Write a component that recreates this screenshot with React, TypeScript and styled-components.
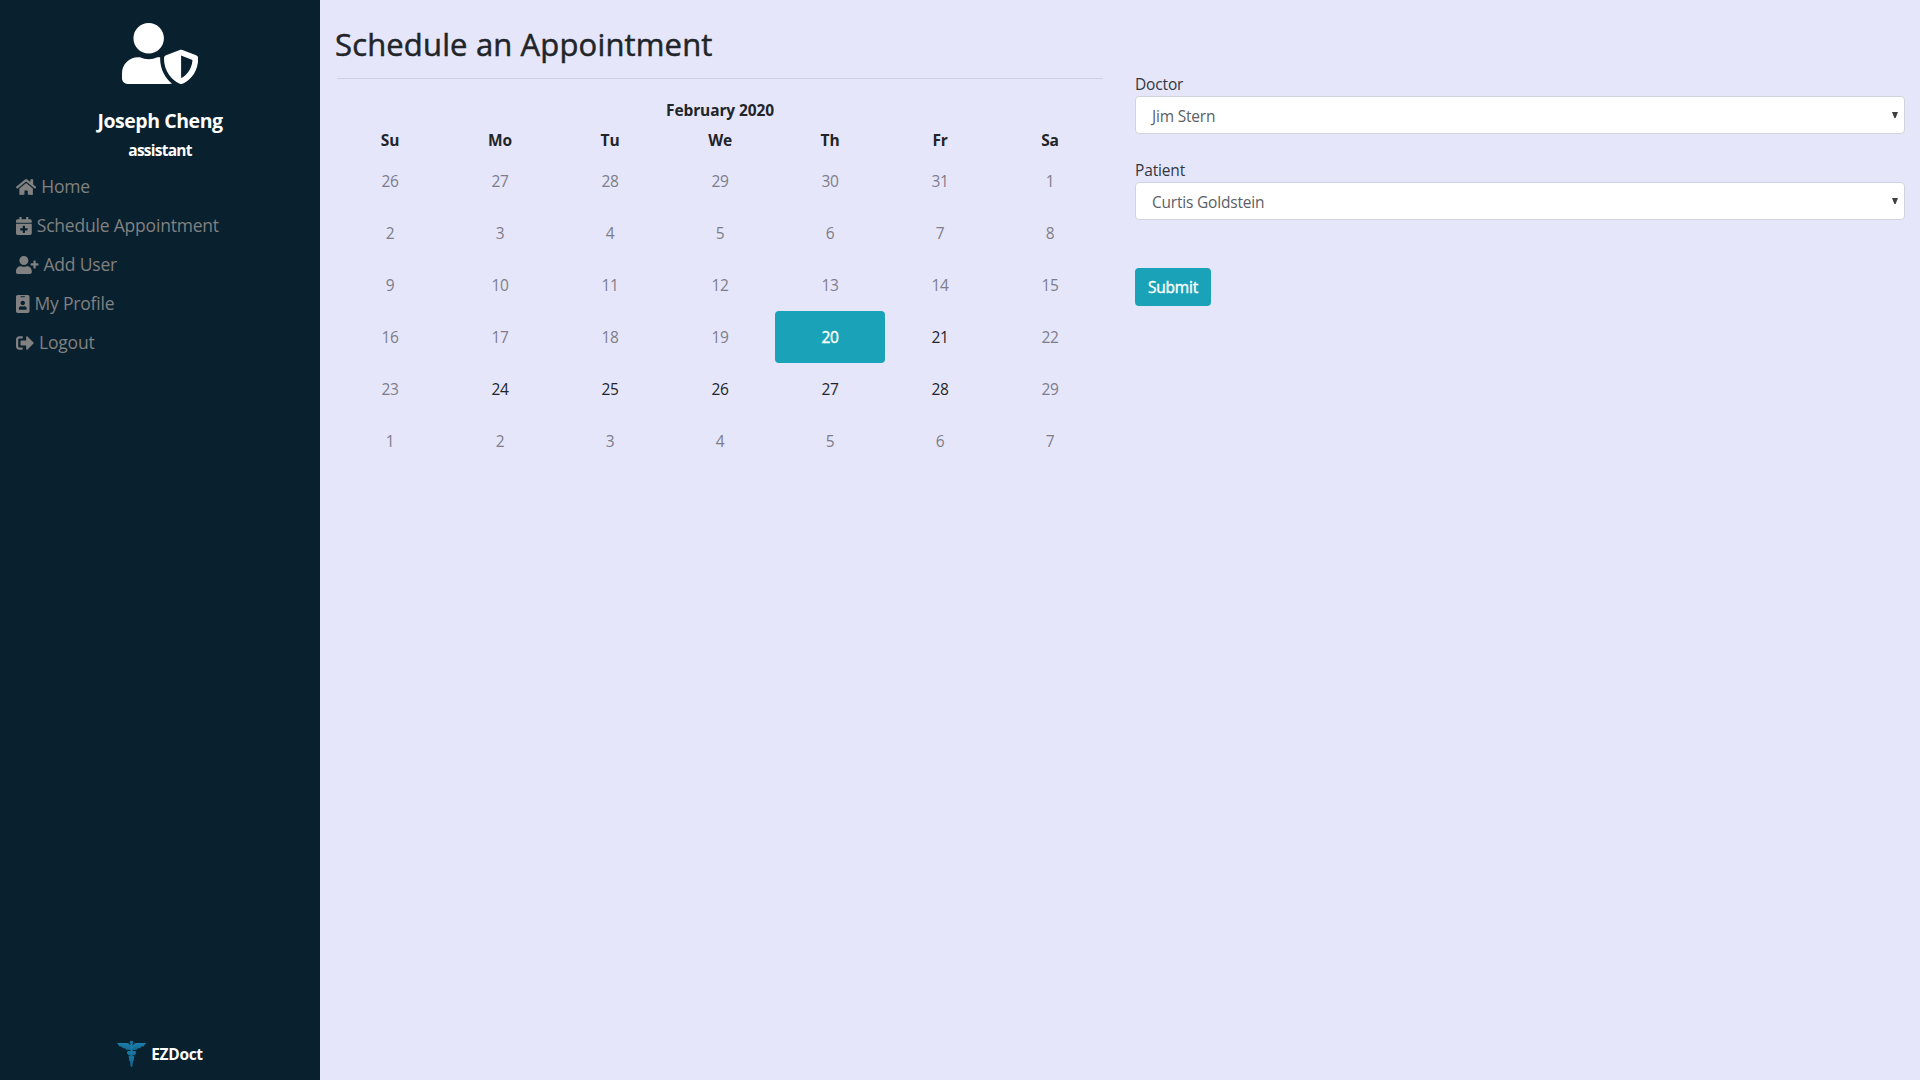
import React from "react";
import styled, { createGlobalStyle } from "styled-components";
import { FaCalendarPlus, FaHome, FaIdBadge, FaSignOutAlt, FaUserPlus, FaUserShield } from "react-icons/fa";

const GlobalStyle = createGlobalStyle`
  * { box-sizing: border-box; }
  body {
    margin: 0;
    background: #e6e6fa;
    color: #212529;
    font-family: "Open Sans", "Noto Sans", sans-serif;
    font-size: 15.5px;
    line-height: 24px;
    overflow: hidden;
  }
`;

const Page = styled.div`
  display: flex;
  height: 1080px;
`;

const Sidebar = styled.aside`
  display: flex;
  flex-direction: column;
  width: 320px;
  background: #09202e;
  color: #fff;
`;

const Profile = styled.div`
  display: flex;
  flex-direction: column;
  align-items: center;
  padding-top: 23px;
`;

const Avatar = styled(FaUserShield)`
  width: 76.25px;
  height: 61px;
`;

const UserName = styled.div`
  margin-top: 22px;
  font-size: 19.5px;
  font-weight: 700;
  line-height: 30px;
  letter-spacing: -0.45px;
`;

const Role = styled.div`
  margin-top: 2px;
  font-size: 15.5px;
  font-weight: 700;
  line-height: 24px;
  letter-spacing: -0.75px;
`;

const Nav = styled.nav`
  display: flex;
  flex-direction: column;
  padding: 5px 16px;
`;

const NavLink = styled.a<{ $icon: number }>`
  display: flex;
  align-items: center;
  gap: 5px;
  height: 39px;
  color: #818181;
  font-size: 17.5px;
  letter-spacing: -0.2px;
  svg {
    width: ${(p) => p.$icon}px;
    height: 18px;
  }
  span {
    margin-top: -1px;
  }
`;

const Brand = styled.footer`
  display: flex;
  align-items: center;
  justify-content: center;
  gap: 4px;
  margin-top: auto;
  padding: 0 1px 13px 0;
  font-weight: 700;
  letter-spacing: -0.3px;
`;

const Main = styled.main`
  display: flex;
  flex: 1;
  gap: 31px;
  padding: 0 15px 0 16px;
`;

const Column = styled.section`
  display: flex;
  flex-direction: column;
  align-items: flex-start;
  width: 768px;
`;

const FormColumn = styled.section`
  display: flex;
  flex-direction: column;
  align-items: flex-start;
  padding-top: 72px;
`;

const Title = styled.h1`
  margin: 23px 0 0 -1px;
  font-size: 31px;
  font-weight: 500;
  line-height: 42px;
  letter-spacing: 0.15px;
  -webkit-text-stroke: 0.5px #212529;
`;

const Rule = styled.div`
  align-self: stretch;
  height: 1px;
  margin: 13px 1px 0 1px;
  background: #cfcfe4;
`;

const Calendar = styled.div`
  display: grid;
  grid-template-columns: repeat(7, 110px);
  grid-template-rows: 24px 33px;
  grid-auto-rows: 52px;
  margin: 19px 0 0 -1px;
`;

const Month = styled.div`
  grid-column: 1 / -1;
  text-align: center;
  font-weight: 700;
  letter-spacing: -0.12px;
`;

const Weekday = styled.div`
  padding-top: 6px;
  text-align: center;
  font-weight: 700;
  letter-spacing: -0.2px;
`;

const Day = styled.div<{ $state: "off" | "open" | "selected" }>`
  display: flex;
  align-items: center;
  justify-content: center;
  border-radius: 4px;
  letter-spacing: -0.3px;
  color: ${(p) => ({ off: "#7d7d89", open: "#212529", selected: "#fff" })[p.$state]};
  background: ${(p) => (p.$state === "selected" ? "#1aa3b8" : "transparent")};
  -webkit-text-stroke: ${(p) => (p.$state === "selected" ? "0.4px #fff" : "0")};
`;

const Label = styled.label`
  line-height: 24px;
  letter-spacing: -0.15px;
  color: #33363f;
`;

const Select = styled.div`
  display: flex;
  align-items: center;
  justify-content: space-between;
  width: 770px;
  height: 38px;
  margin-bottom: 24px;
  padding: 2px 6px 0 16px;
  border: 1px solid #ced4da;
  border-radius: 4px;
  background: #fff;
  color: #5b6066;
  letter-spacing: -0.2px;
  svg {
    margin-top: -3px;
  }
`;

const Submit = styled.button`
  width: 76px;
  height: 38px;
  margin-top: 24px;
  padding: 0;
  border: 0;
  border-radius: 4px;
  background: #1aa3b8;
  color: #fff;
  font: 500 15.5px/24px "Open Sans", sans-serif;
  letter-spacing: -0.2px;
  -webkit-text-stroke: 0.4px #fff;
`;

const Caduceus = () => (
  <svg width="31" height="27" viewBox="0 0 31 27">
    <defs>
      <linearGradient id="wing" x1="0" y1="0" x2="0" y2="1">
        <stop offset="0" stopColor="#1b80ae" />
        <stop offset="1" stopColor="#15658f" />
      </linearGradient>
    </defs>
    <g fill="url(#wing)">
      <path d="M1 3 H11 Q13.5 3.4 14 5 H17 Q17.5 3.4 20 3 H30 L27.5 6.5 H25.5 L24 8.3 H22 L20.5 10 H10.5 L9 8.3 H7 L5.5 6.5 H3.5 Z" />
      <circle cx="15.5" cy="2.6" r="1.8" />
      <path d="M11.5 11 H19.5 L20 13.5 L18.3 15.5 H12.7 L11 13.5 Z" />
      <path d="M12.5 16.3 H18.5 L17.6 19 L18 20 L16.6 22 L16 27 H15 L14.4 22 L13 20 L13.4 19 Z" />
      <path d="M14.5 4 H16.5 V26 H14.5 Z" />
    </g>
  </svg>
);

const Arrow = () => (
  <svg width="6" height="6" viewBox="0 0 6 6">
    <path d="M0 0H6L3.6 6H2.4Z" fill="#404040" />
  </svg>
);

const links = [
  { label: "Home", Icon: FaHome, icon: 20.25 },
  { label: "Schedule Appointment", Icon: FaCalendarPlus, icon: 15.75 },
  { label: "Add User", Icon: FaUserPlus, icon: 22.5 },
  { label: "My Profile", Icon: FaIdBadge, icon: 13.5 },
  { label: "Logout", Icon: FaSignOutAlt, icon: 18 },
];

const weekdays = ["Su", "Mo", "Tu", "We", "Th", "Fr", "Sa"];
const openDays = [21, 24, 25, 26, 27, 28];

const days = Array.from({ length: 42 }, (_, i) => {
  const date = new Date(2020, 0, 26 + i);
  const day = date.getDate();
  const inMonth = date.getMonth() === 1;
  const state = inMonth && day === 20 ? "selected" : inMonth && openDays.includes(day) ? "open" : "off";
  return { day, state: state as "off" | "open" | "selected" };
});

export default function App() {
  return (
    <Page>
      <GlobalStyle />
      <Sidebar>
        <Profile>
          <Avatar />
          <UserName>Joseph Cheng</UserName>
          <Role>assistant</Role>
        </Profile>
        <Nav>
          {links.map(({ label, Icon, icon }) => (
            <NavLink key={label} $icon={icon}>
              <Icon />
              <span>{label}</span>
            </NavLink>
          ))}
        </Nav>
        <Brand>
          <Caduceus />
          <span>EZDoct</span>
        </Brand>
      </Sidebar>
      <Main>
        <Column>
          <Title>Schedule an Appointment</Title>
          <Rule />
          <Calendar>
            <Month>February 2020</Month>
            {weekdays.map((d) => (
              <Weekday key={d}>{d}</Weekday>
            ))}
            {days.map((d, i) => (
              <Day key={i} $state={d.state}>
                {d.day}
              </Day>
            ))}
          </Calendar>
        </Column>
        <FormColumn>
          <Label>Doctor</Label>
          <Select>
            <span>Jim Stern</span>
            <Arrow />
          </Select>
          <Label>Patient</Label>
          <Select>
            <span>Curtis Goldstein</span>
            <Arrow />
          </Select>
          <Submit>Submit</Submit>
        </FormColumn>
      </Main>
    </Page>
  );
}
